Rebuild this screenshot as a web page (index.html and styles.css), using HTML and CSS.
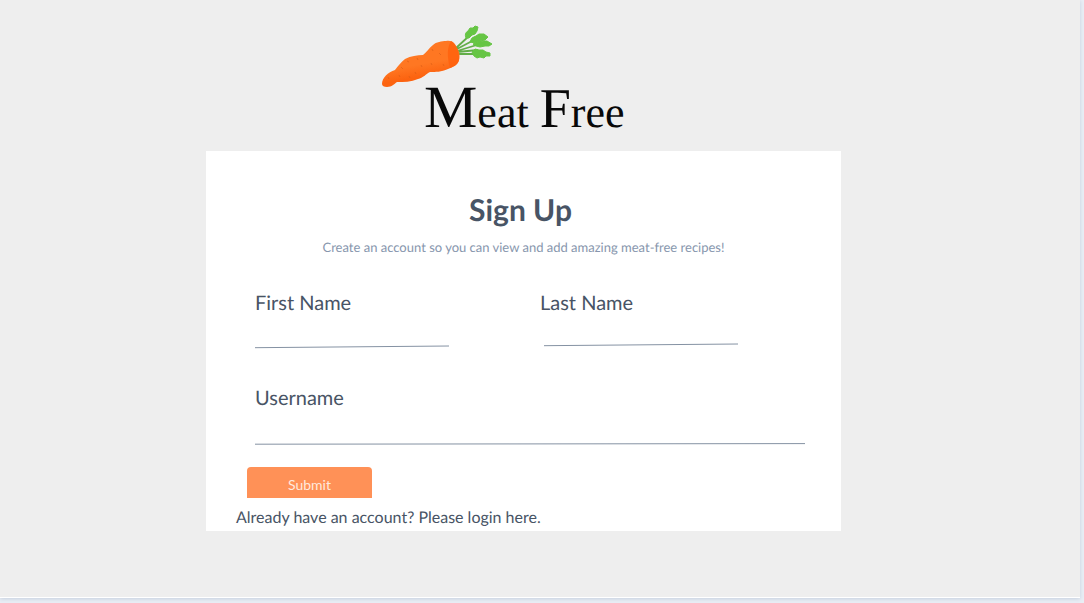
FILE: index.html
```html
<!DOCTYPE html>
<html lang="en">
<head>
<meta charset="utf-8">
<meta name="viewport" content="width=device-width, initial-scale=1">
<title>Meat Free – Sign Up</title>
<link rel="stylesheet" href="styles.css">
</head>
<body>
<div class="page">
  <header class="brand">
    <svg class="logo" viewBox="0 0 260 127" role="img" aria-label="Meat Free">
      <defs>
        <linearGradient id="root" x1="0" y1="0" x2="0.3" y2="1">
          <stop offset="0.6" stop-color="#ff7722"/>
          <stop offset="0.85" stop-color="#fc6310"/>
        </linearGradient>
      </defs>
      <g fill="none" stroke="#62ad48" stroke-width="1.8">
        <path d="M74 24 87 12M75 25 92 16M75 27 98 20M75 28 96 26M75 30 92 30"/>
      </g>
      <g fill="#66c544" stroke="#66c544" stroke-width="1" stroke-linejoin="round">
        <path d="M84 14Q82 9 86 7L88 4 91 4 93 2 96 3 95 7 93 10 90 11 87 14Z"/>
        <path d="M88 18Q89 13 94 12L97 10 102 10 106 13 103 16 98 17 93 19Z"/>
        <path d="M91 20Q97 17 102 17L105 17 110 20 107 22 103 22 98 23 94 22Z"/>
        <path d="M90 28 93 25 97 26 101 26 104 28 108 29 108 32 104 32 102 34 98 33 95 34 92 32Z"/>
      </g>
      <path fill="url(#root)" d="M0 60C0 54 6 48 13 46C16 42 19 38 23 35C29 32 35 31 41 31C44 29 47 24 51 21C54 18 60 17 64 17C71 16 72 19 75 24C78 28 78 33 77 36C76 41 71 43 66 45C59 48 54 48 48 48C44 50 41 54 36 55C29 58 22 58 15 58C12 60 10 63 5 63C2 63 0 62 0 60Z"/>
      <path fill="#ff600d" d="M69 17C65 23 65 33 68 44C75 42 78 37 77 33C77 27 74 19 69 17Z" opacity="0.8"/>
      <g stroke="#d65a14" stroke-width="1" opacity="0.55">
        <path d="M6 53l1 2M19 43l2 2M25 37l2 1M35 34l1 2M39 41l1 2M50 25l1 2M57 29l2 2M49 39l1 2M61 40l1 2M33 48l1 2M17 51l1 2M27 52l1 2"/>
      </g>
      <text class="wordmark" x="42" y="103"><tspan class="wordmark-m">M</tspan>eat <tspan class="wordmark-f">F</tspan>ree</text>
    </svg>
  </header>

  <main class="card">
    <h1 class="title">Sign Up</h1>
    <p class="subtitle">Create an account so you can view and add amazing meat-free recipes!</p>
    <form class="form">
      <div class="field field-half">
        <label class="label" for="first-name">First Name</label>
        <input class="input" id="first-name" name="firstName" type="text">
        <svg class="rule" viewBox="0 0 194 8" preserveAspectRatio="none" aria-hidden="true"><path d="M0 4.7 194 3"/></svg>
      </div>
      <div class="field field-half">
        <label class="label" for="last-name">Last Name</label>
        <input class="input" id="last-name" name="lastName" type="text">
        <svg class="rule rule-inset" viewBox="0 0 194 8" preserveAspectRatio="none" aria-hidden="true"><path d="M0 2.7 194 1"/></svg>
      </div>
      <div class="field field-full">
        <label class="label" for="username">Username</label>
        <input class="input" id="username" name="username" type="text">
        <svg class="rule" viewBox="0 0 550 8" preserveAspectRatio="none" aria-hidden="true"><path d="M0 6.2 550 5.6"/></svg>
      </div>
      <button class="submit" type="submit">Submit</button>
    </form>
    <p class="login">Already have an account? Please <a class="login-link" href="#login">login here.</a></p>
  </main>
</div>
</body>
</html>
```
FILE: styles.css
```css
* {
  box-sizing: border-box;
}

body {
  margin: 0;
  min-height: 100vh;
  display: flex;
  padding: 0 4px 5px 0;
  background: #e9eef5;
  color: #485465;
  font-family: Lato, "Open Sans", sans-serif;
  text-rendering: geometricPrecision;
}

.page {
  flex: 1;
  display: flex;
  flex-direction: column;
  align-items: center;
  padding-right: 33px;
  background: #eee;
  border-bottom: 1px solid #fff;
  box-shadow: 0 1px 4px #c5cfdd;
}

.brand {
  padding: 24px 24px 0 0;
}

.logo {
  display: block;
  width: 260px;
  height: 127px;
}

.wordmark {
  font-family: "Liberation Serif", serif;
  font-size: 44px;
  fill: #080808;
}

.wordmark-m {
  font-size: 60px;
}

.wordmark-f {
  font-size: 56px;
}

.card {
  width: 100%;
  max-width: 635px;
  padding: 39px 30px 1px;
  background: #fff;
}

.title {
  margin: 0;
  padding-right: 6px;
  font-size: 30px;
  line-height: 40px;
  text-align: center;
}

.subtitle {
  margin: 7px 0 34px;
  color: #8796ad;
  font-size: 13px;
  line-height: 20px;
  text-align: center;
}

.form {
  display: grid;
  grid-template-columns: 1fr 1fr;
  column-gap: 20px;
  row-gap: 35px;
  margin: 0 6px 0 19px;
}

.field {
  display: flex;
  flex-direction: column;
}

.field-half .input,
.field-half .rule {
  max-width: 194px;
}

.field-full {
  grid-column: 1 / -1;
}

.label {
  font-size: 20px;
  line-height: 24px;
}

.input {
  width: 100%;
  height: 28px;
  padding: 0;
  border: 0;
  outline: 0;
  background: transparent;
  color: inherit;
  font: inherit;
}

.rule {
  display: block;
  width: 100%;
  height: 8px;
  fill: none;
  stroke: #8592a3;
  stroke-width: 1;
}

.rule-inset {
  margin-left: 4px;
}

.submit {
  width: 125px;
  height: 31px;
  margin: -14px 0 0 -8px;
  padding: 4px 0 0;
  border: 0;
  border-radius: 4px 4px 0 0;
  background: #ff9157;
  color: #ffe9dd;
  font-family: inherit;
  font-size: 14px;
  line-height: 20px;
  cursor: pointer;
}

.login {
  margin: 8px 0 0;
  font-size: 16px;
  line-height: 24px;
}

.login-link {
  color: inherit;
  text-decoration: none;
}
```
